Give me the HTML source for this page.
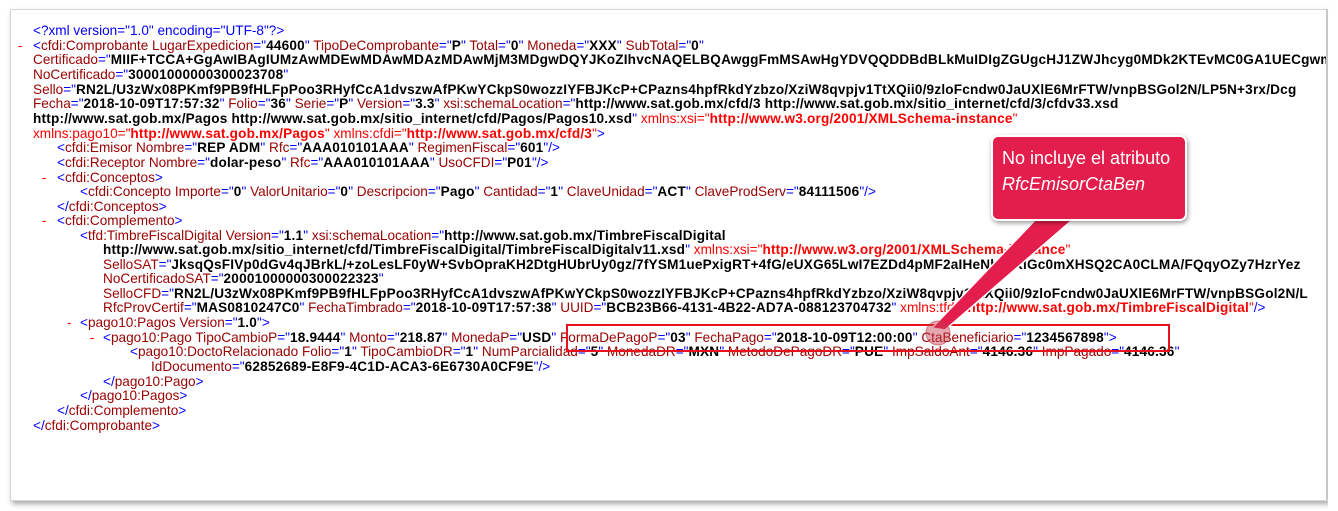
<!DOCTYPE html>
<html><head><meta charset="utf-8"><style>
html,body{margin:0;padding:0;width:1338px;height:511px;background:#fff;overflow:hidden;font-family:"Liberation Sans",sans-serif;}
#panel{position:absolute;left:10px;top:9px;width:1316px;height:490px;background:#fff;border:1px solid #d6d6d6;box-shadow:2px 3px 5px rgba(0,0,0,.35);overflow:hidden;}
.l{position:absolute;white-space:nowrap;font-size:13.6px;line-height:15px;}
.t{color:#0000ff}.a{color:#990000}.v{color:#000;font-weight:bold;letter-spacing:0.2px}.x{color:#ff0000}.xv{color:#ff0000;font-weight:bold;letter-spacing:0.2px}.m{color:#ff0000}
#box{position:absolute;left:566px;top:324px;width:600px;height:24px;border:2px solid #e8121c;}
#call{position:absolute;left:991px;top:135px;width:196px;height:86px;background:#e41e4c;border:2px solid #fff;border-radius:7px;box-shadow:1px 2px 5px rgba(0,0,0,.4);color:#fff;font-size:18px;line-height:26px;padding:8px 0 0 9px;box-sizing:border-box;white-space:nowrap;}
</style></head><body>
<div id="panel"></div>
<div class="l" style="left:33px;top:23px"><span class="t">&lt;?xml version="1.0" encoding="UTF-8"?&gt;</span></div>
<div class="l" style="left:18px;top:38px"><span class="m">-</span></div>
<div class="l" style="left:33px;top:38px"><span class="t">&lt;</span><span class="a">cfdi:Comprobante LugarExpedicion</span><span class="t">="</span><span class="v">44600</span><span class="t">"</span> <span class="a">TipoDeComprobante</span><span class="t">="</span><span class="v">P</span><span class="t">"</span> <span class="a">Total</span><span class="t">="</span><span class="v">0</span><span class="t">"</span> <span class="a">Moneda</span><span class="t">="</span><span class="v">XXX</span><span class="t">"</span> <span class="a">SubTotal</span><span class="t">="</span><span class="v">0</span><span class="t">"</span></div>
<div class="l" style="left:33px;top:52px"><span class="a">Certificado</span><span class="t">="</span><span class="v">MIIF+TCCA+GgAwIBAgIUMzAwMDEwMDAwMDAzMDAwMjM3MDgwDQYJKoZIhvcNAQELBQAwggFmMSAwHgYDVQQDDBdBLkMuIDIgZGUgcHJ1ZWJhcyg0MDk2KTEvMC0GA1UECgwm</span></div>
<div class="l" style="left:33px;top:67px"><span class="a">NoCertificado</span><span class="t">="</span><span class="v">30001000000300023708</span><span class="t">"</span></div>
<div class="l" style="left:33px;top:82px"><span class="a">Sello</span><span class="t">="</span><span class="v">RN2L/U3zWx08PKmf9PB9fHLFpPoo3RHyfCcA1dvszwAfPKwYCkpS0wozzIYFBJKcP+CPazns4hpfRkdYzbzo/XziW8qvpjv1TtXQii0/9zloFcndw0JaUXlE6MrFTW/vnpBSGol2N/LP5N+3rx/Dcg</span></div>
<div class="l" style="left:33px;top:96px"><span class="a">Fecha</span><span class="t">="</span><span class="v">2018-10-09T17:57:32</span><span class="t">"</span> <span class="a">Folio</span><span class="t">="</span><span class="v">36</span><span class="t">"</span> <span class="a">Serie</span><span class="t">="</span><span class="v">P</span><span class="t">"</span> <span class="a">Version</span><span class="t">="</span><span class="v">3.3</span><span class="t">"</span> <span class="a">xsi:schemaLocation</span><span class="t">="</span><span class="v">http://www.sat.gob.mx/cfd/3 http://www.sat.gob.mx/sitio_internet/cfd/3/cfdv33.xsd</span></div>
<div class="l" style="left:33px;top:111px"><span class="v">http://www.sat.gob.mx/Pagos http://www.sat.gob.mx/sitio_internet/cfd/Pagos/Pagos10.xsd</span><span class="t">"</span> <span class="x">xmlns:xsi</span><span class="x">="</span><span class="xv">http://www.w3.org/2001/XMLSchema-instance</span><span class="x">"</span></div>
<div class="l" style="left:33px;top:126px"><span class="x">xmlns:pago10="</span><span class="xv">http://www.sat.gob.mx/Pagos</span><span class="x">" xmlns:cfdi="</span><span class="xv">http://www.sat.gob.mx/cfd/3</span><span class="x">"</span><span class="t">&gt;</span></div>
<div class="l" style="left:57px;top:140px"><span class="t">&lt;</span><span class="a">cfdi:Emisor Nombre</span><span class="t">="</span><span class="v">REP ADM</span><span class="t">"</span> <span class="a">Rfc</span><span class="t">="</span><span class="v">AAA010101AAA</span><span class="t">"</span> <span class="a">RegimenFiscal</span><span class="t">="</span><span class="v">601</span><span class="t">"/&gt;</span></div>
<div class="l" style="left:57px;top:155px"><span class="t">&lt;</span><span class="a">cfdi:Receptor Nombre</span><span class="t">="</span><span class="v">dolar-peso</span><span class="t">"</span> <span class="a">Rfc</span><span class="t">="</span><span class="v">AAA010101AAA</span><span class="t">"</span> <span class="a">UsoCFDI</span><span class="t">="</span><span class="v">P01</span><span class="t">"/&gt;</span></div>
<div class="l" style="left:42px;top:170px"><span class="m">-</span></div>
<div class="l" style="left:57px;top:170px"><span class="t">&lt;</span><span class="a">cfdi:Conceptos</span><span class="t">&gt;</span></div>
<div class="l" style="left:80px;top:184px"><span class="t">&lt;</span><span class="a">cfdi:Concepto Importe</span><span class="t">="</span><span class="v">0</span><span class="t">"</span> <span class="a">ValorUnitario</span><span class="t">="</span><span class="v">0</span><span class="t">"</span> <span class="a">Descripcion</span><span class="t">="</span><span class="v">Pago</span><span class="t">"</span> <span class="a">Cantidad</span><span class="t">="</span><span class="v">1</span><span class="t">"</span> <span class="a">ClaveUnidad</span><span class="t">="</span><span class="v">ACT</span><span class="t">"</span> <span class="a">ClaveProdServ</span><span class="t">="</span><span class="v">84111506</span><span class="t">"/&gt;</span></div>
<div class="l" style="left:57px;top:199px"><span class="t">&lt;/</span><span class="a">cfdi:Conceptos</span><span class="t">&gt;</span></div>
<div class="l" style="left:42px;top:213px"><span class="m">-</span></div>
<div class="l" style="left:57px;top:213px"><span class="t">&lt;</span><span class="a">cfdi:Complemento</span><span class="t">&gt;</span></div>
<div class="l" style="left:80px;top:228px"><span class="t">&lt;</span><span class="a">tfd:TimbreFiscalDigital Version</span><span class="t">="</span><span class="v">1.1</span><span class="t">"</span> <span class="a">xsi:schemaLocation</span><span class="t">="</span><span class="v">http://www.sat.gob.mx/TimbreFiscalDigital</span></div>
<div class="l" style="left:103px;top:242px"><span class="v">http://www.sat.gob.mx/sitio_internet/cfd/TimbreFiscalDigital/TimbreFiscalDigitalv11.xsd</span><span class="t">"</span> <span class="x">xmlns:xsi="</span><span class="xv">http://www.w3.org/2001/XMLSchema-instance</span><span class="x">"</span></div>
<div class="l" style="left:103px;top:257px"><span class="a">SelloSAT</span><span class="t">="</span><span class="v">JksqQsFIVp0dGv4qJBrkL/+zoLesLF0yW+SvbOpraKH2DtgHUbrUy0gz/7fYSM1uePxigRT+4fG/eUXG65LwI7EZDd4pMF2aIHeNbtrlKlGc0mXHSQ2CA0CLMA/FQqyOZy7HzrYez</span></div>
<div class="l" style="left:103px;top:271px"><span class="a">NoCertificadoSAT</span><span class="t">="</span><span class="v">20001000000300022323</span><span class="t">"</span></div>
<div class="l" style="left:103px;top:286px"><span class="a">SelloCFD</span><span class="t">="</span><span class="v">RN2L/U3zWx08PKmf9PB9fHLFpPoo3RHyfCcA1dvszwAfPKwYCkpS0wozzIYFBJKcP+CPazns4hpfRkdYzbzo/XziW8qvpjv1TtXQii0/9zloFcndw0JaUXlE6MrFTW/vnpBSGol2N/L</span></div>
<div class="l" style="left:103px;top:300px"><span class="a">RfcProvCertif</span><span class="t">="</span><span class="v">MAS0810247C0</span><span class="t">"</span> <span class="a">FechaTimbrado</span><span class="t">="</span><span class="v">2018-10-09T17:57:38</span><span class="t">"</span> <span class="a">UUID</span><span class="t">="</span><span class="v">BCB23B66-4131-4B22-AD7A-088123704732</span><span class="t">"</span> <span class="x">xmlns:tfd="</span><span class="xv">http://www.sat.gob.mx/TimbreFiscalDigital</span><span class="x">"</span><span class="t">/&gt;</span></div>
<div class="l" style="left:67px;top:315px"><span class="m">-</span></div>
<div class="l" style="left:80px;top:315px"><span class="t">&lt;</span><span class="a">pago10:Pagos Version</span><span class="t">="</span><span class="v">1.0</span><span class="t">"&gt;</span></div>
<div class="l" style="left:90px;top:330px"><span class="m">-</span></div>
<div class="l" style="left:103px;top:330px"><span class="t">&lt;</span><span class="a">pago10:Pago TipoCambioP</span><span class="t">="</span><span class="v">18.9444</span><span class="t">"</span> <span class="a">Monto</span><span class="t">="</span><span class="v">218.87</span><span class="t">"</span> <span class="a">MonedaP</span><span class="t">="</span><span class="v">USD</span><span class="t">"</span> <span class="a">FormaDePagoP</span><span class="t">="</span><span class="v">03</span><span class="t">"</span> <span class="a">FechaPago</span><span class="t">="</span><span class="v">2018-10-09T12:00:00</span><span class="t">"</span> <span class="a">CtaBeneficiario</span><span class="t">="</span><span class="v">1234567898</span><span class="t">"&gt;</span></div>
<div class="l" style="left:130px;top:344px"><span class="t">&lt;</span><span class="a">pago10:DoctoRelacionado Folio</span><span class="t">="</span><span class="v">1</span><span class="t">"</span> <span class="a">TipoCambioDR</span><span class="t">="</span><span class="v">1</span><span class="t">"</span> <span class="a">NumParcialidad</span><span class="t">="</span><span class="v">5</span><span class="t">"</span> <span class="a">MonedaDR</span><span class="t">="</span><span class="v">MXN</span><span class="t">"</span> <span class="a">MetodoDePagoDR</span><span class="t">="</span><span class="v">PUE</span><span class="t">"</span> <span class="a">ImpSaldoAnt</span><span class="t">="</span><span class="v">4146.36</span><span class="t">"</span> <span class="a">ImpPagado</span><span class="t">="</span><span class="v">4146.36</span><span class="t">"</span></div>
<div class="l" style="left:151px;top:359px"><span class="a">IdDocumento</span><span class="t">="</span><span class="v">62852689-E8F9-4C1D-ACA3-6E6730A0CF9E</span><span class="t">"/&gt;</span></div>
<div class="l" style="left:103px;top:374px"><span class="t">&lt;/</span><span class="a">pago10:Pago</span><span class="t">&gt;</span></div>
<div class="l" style="left:80px;top:388px"><span class="t">&lt;/</span><span class="a">pago10:Pagos</span><span class="t">&gt;</span></div>
<div class="l" style="left:57px;top:403px"><span class="t">&lt;/</span><span class="a">cfdi:Complemento</span><span class="t">&gt;</span></div>
<div class="l" style="left:33px;top:418px"><span class="t">&lt;/</span><span class="a">cfdi:Comprobante</span><span class="t">&gt;</span></div>
<div style="position:absolute;left:1328px;top:9px;width:10px;height:502px;background:#fff"></div>
<div style="position:absolute;left:1326px;top:9px;width:2px;height:491px;background:#c8c8c8"></div>
<div id="box"></div>
<svg style="position:absolute;left:0;top:0" width="1338" height="511">
<polygon points="1040,215 1078,215 945,330 932,328" fill="#e41e4c" stroke="#fff" stroke-width="1.5"/>
<circle cx="938" cy="333" r="12" fill="rgba(200,60,80,0.45)" stroke="rgba(180,60,70,0.6)"/>
</svg>
<div id="call">No incluye el atributo<br><i>RfcEmisorCtaBen</i></div>
</body></html>
